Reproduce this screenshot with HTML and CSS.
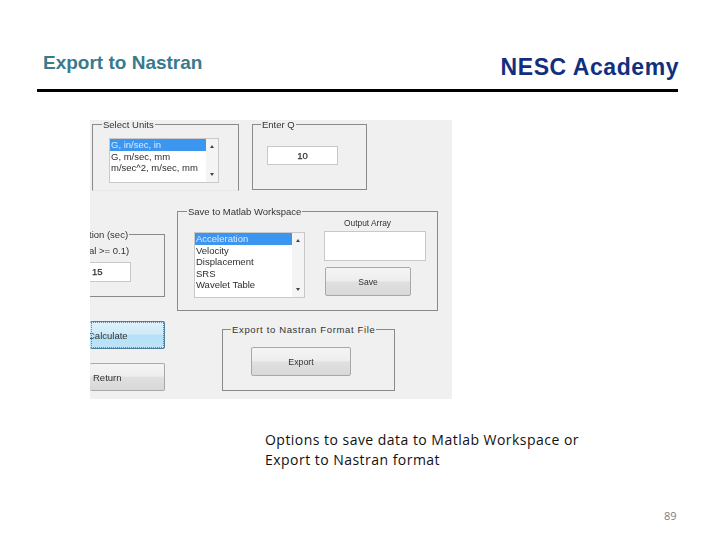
FILE: index.html
```html
<!DOCTYPE html>
<html lang="en">
<head>
<meta charset="utf-8">
<title>Export to Nastran</title>
<link rel="stylesheet" href="styles.css">
</head>
<body>
<div class="slide">
  <header class="head">
    <h1 class="title">Export to Nastran</h1>
    <div class="brand">NESC Academy</div>
  </header>
  <main class="shot">
    <div class="gui">
      <div class="row-top">
        <section class="panel units">
          <span class="legend">Select Units</span>
          <div class="list list-units">
            <div class="items">
              <div class="item sel">G, in/sec, in</div>
              <div class="item">G, m/sec, mm</div>
              <div class="item">m/sec^2, m/sec, mm</div>
            </div>
            <div class="scroll"><i class="up"></i><i class="down"></i></div>
          </div>
        </section>
        <section class="panel q">
          <span class="legend">Enter Q</span>
          <div class="input input-q">10</div>
        </section>
      </div>
      <div class="row-low">
        <div class="col-left">
          <section class="panel duration">
            <span class="legend legend-cut">tion (sec)</span>
            <div class="hint">al &gt;= 0.1)</div>
            <div class="input input-dur">15</div>
          </section>
          <div class="btn btn-calc">Calculate</div>
          <div class="btn btn-return">Return</div>
        </div>
        <div class="col-right">
          <section class="panel save">
            <span class="legend">Save to Matlab Workspace</span>
            <div class="list list-save">
              <div class="items">
                <div class="item sel">Acceleration</div>
                <div class="item">Velocity</div>
                <div class="item">Displacement</div>
                <div class="item">SRS</div>
                <div class="item">Wavelet Table</div>
              </div>
              <div class="scroll"><i class="up"></i><i class="down"></i></div>
            </div>
            <div class="output">
              <div class="output-label">Output Array</div>
              <div class="input input-out"></div>
              <div class="btn btn-save">Save</div>
            </div>
          </section>
          <section class="panel export">
            <span class="legend legend-wide">Export to Nastran Format File</span>
            <div class="btn btn-export">Export</div>
          </section>
        </div>
      </div>
    </div>
  </main>
  <p class="caption">Options to save data to Matlab Workspace or<br>Export to Nastran format</p>
  <footer class="page-no">89</footer>
</div>
</body>
</html>
```
FILE: styles.css
```css
* { box-sizing: border-box; }
html, body { margin: 0; padding: 0; background: #fff; }
.slide { width: 720px; height: 540px; overflow: hidden; display: flex; flex-direction: column; font-family: "Liberation Sans", Arial, sans-serif; }

.head { margin: 52px 42px 0 37px; height: 40px; border-bottom: 3px solid #000; display: flex; justify-content: space-between; align-items: flex-start; }
.title { margin: 0 0 0 6px; font-size: 19px; line-height: 22px; font-weight: 700; color: #3a7a8c; }
.brand { margin-top: 2px; margin-right: -1px; font-size: 23px; line-height: 27px; font-weight: 700; color: #10307f; letter-spacing: 0.56px; }

.shot { margin: 28px 0 0 90px; width: 362px; height: 279px; background: #f0f0f0; overflow: hidden; flex: none; }
.gui { padding-top: 4px; font-size: 9.5px; color: #333; filter: blur(0.45px); }
.row-top { display: flex; padding-left: 2px; gap: 13px; }
.row-low { display: flex; margin-top: 20px; gap: 12px; }

.panel { position: relative; border: 1px solid #8a8a8a; }
.legend { position: absolute; top: -6px; left: 9px; padding: 0 1px; line-height: 11px; background: #f0f0f0; white-space: nowrap; }
.legend-wide { left: 8px; letter-spacing: 0.65px; }
.units { width: 147px; height: 67px; padding: 13px 0 0 16px; border-bottom-color: #e8e8e8; }
.q { width: 115px; height: 66px; padding: 21px 0 0 14px; }
.q .legend { left: 8px; }

.list { display: flex; background: #fff; border: 1px solid #c9c9c9; }
.items { flex: 1; min-width: 0; }
.item { line-height: 11.5px; height: 11.5px; padding-left: 1px; white-space: nowrap; color: #2c2c2c; }
.item.sel { background: #3c96f0; color: #dcebfb; }
.scroll { width: 12px; display: flex; flex-direction: column; justify-content: space-between; align-items: center; padding: 6px 0; background: #f4f4f4; }
.up, .down { display: block; width: 0; height: 0; border-left: 2.5px solid transparent; border-right: 2.5px solid transparent; }
.up { border-bottom: 3px solid #444; }
.down { border-top: 3px solid #444; }
.list-units { width: 110px; height: 45px; }
.list-save { width: 111px; height: 66px; flex: none; }

.input { background: #fff; border: 1px solid #c8c8c8; }
.input-q { width: 71px; height: 19px; line-height: 17px; text-align: center; -webkit-text-stroke: 0.25px #333; color: #333; }

.col-left { width: 75px; flex: none; padding-top: 23px; }
.duration { height: 63px; margin-left: -1px; width: 76px; border-left: 0; }
.legend-cut { left: 0; padding-left: 0; }
.hint { position: absolute; left: 0; top: 10px; line-height: 11px; }
.input-dur { position: absolute; left: 0; top: 27px; width: 42px; height: 20px; line-height: 18px; padding-left: 3px; border-left: 0; -webkit-text-stroke: 0.25px #333; }

.btn { display: flex; align-items: center; justify-content: center; border: 1px solid #a8a8a8; border-radius: 2px; background: linear-gradient(#f4f4f4 0, #eeeeee 46%, #e0e0e0 52%, #d8d8d8 100%); color: #333; }
.btn-calc { width: 75px; height: 28px; margin-top: 24px; justify-content: flex-start; padding-left: 0; border-color: #4f7f9c; border-left: 0; background: linear-gradient(#dff2fb 0, #cfeafa 46%, #b4e0f7 52%, #bfe4f7 100%); outline: 1px dotted #6a8494; outline-offset: -2px; text-indent: -2px; }
.btn-return { width: 75px; height: 28px; margin-top: 14px; justify-content: flex-start; padding-left: 3px; border-left: 0; }

.col-right { flex: none; }
.save { width: 261px; height: 100px; display: flex; padding: 20px 0 0 16px; }
.output { margin-left: 19px; margin-top: -14px; width: 102px; display: flex; flex-direction: column; align-items: flex-start; }
.output-label { line-height: 11px; font-size: 8.4px; margin-left: 20px; }
.input-out { width: 102px; height: 30px; margin-top: 2px; }
.btn-save { width: 86px; height: 29px; margin-top: 6px; margin-left: 1px; font-size: 8.6px; }

.export { width: 173px; height: 62px; margin: 18px 0 0 45px; padding: 17px 0 0 28px; }
.btn-export { width: 100px; height: 29px; font-size: 8.8px; }

.caption { margin: 31px 0 0 265px; font-family: "Open Sans", sans-serif; font-size: 14px; line-height: 20px; color: #111; letter-spacing: 0.47px; }
.page-no { margin: 39px 0 0 664px; font-family: "Open Sans", sans-serif; font-size: 11px; line-height: 14px; color: #808080; }
```
